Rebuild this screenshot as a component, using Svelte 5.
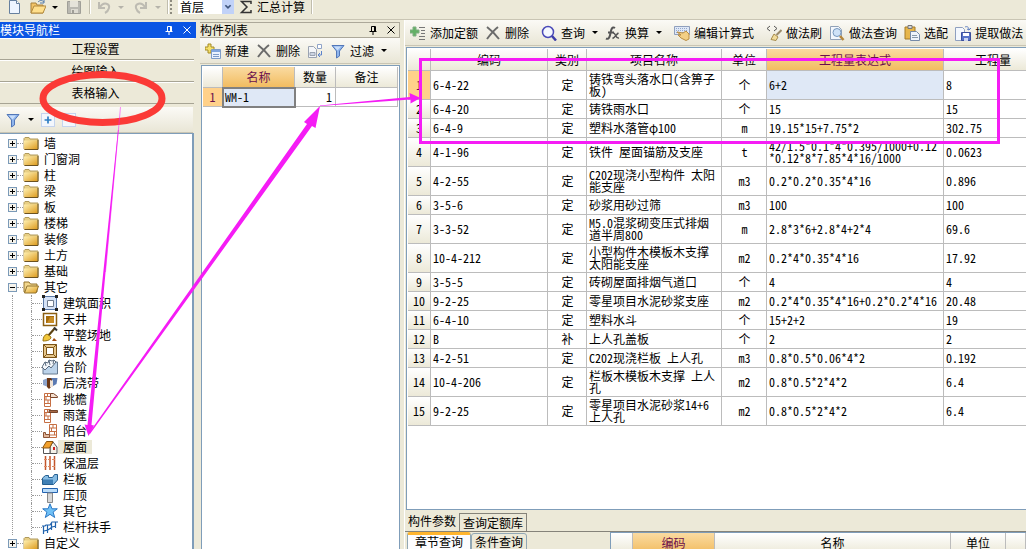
<script lang="ts">
    const folders = ['墙', '门窗洞', '柱', '梁', '板', '楼梯', '装修', '土方', '基础'];

    const children = [
        { text: '建筑面积', icon: 'area' },
        { text: '天井', icon: 'patio' },
        { text: '平整场地', icon: 'shovel' },
        { text: '散水', icon: 'apron' },
        { text: '台阶', icon: 'steps' },
        { text: '后浇带', icon: 'strip' },
        { text: '挑檐', icon: 'eave' },
        { text: '雨蓬', icon: 'canopy' },
        { text: '阳台', icon: 'balcony' },
        { text: '屋面', icon: 'roof' },
        { text: '保温层', icon: 'insulation' },
        { text: '栏板', icon: 'panel' },
        { text: '压顶', icon: 'coping' },
        { text: '其它', icon: 'star' },
        { text: '栏杆扶手', icon: 'rail' }
    ];

    const rows = [
        ['6-4-22', '定', '铸铁弯头落水口(含箅子板)', '个', '6+2', '8'],
        ['6-4-20', '定', '铸铁雨水口', '个', '15', '15'],
        ['6-4-9', '定', '塑料水落管φ100', 'm', '19.15*15+7.75*2', '302.75'],
        ['4-1-96', '定', '铁件 屋面锚筋及支座', 't', '42/1.5*0.1*4*0.395/1000+0.12*0.12*8*7.85*4*16/1000', '0.0623'],
        ['4-2-55', '定', 'C202现浇小型构件 太阳能支座', 'm3', '0.2*0.2*0.35*4*16', '0.896'],
        ['3-5-6', '定', '砂浆用砂过筛', 'm3', '100', '100'],
        ['3-3-52', '定', 'M5.0混浆砌变压式排烟道半周800', 'm', '2.8*3*6+2.8*4+2*4', '69.6'],
        ['10-4-212', '定', '小型构件木模板木支撑 太阳能支座', 'm2', '0.2*4*0.35*4*16', '17.92'],
        ['3-5-5', '定', '砖砌屋面排烟气道口', '个', '4', '4'],
        ['9-2-25', '定', '零星项目水泥砂浆支座', 'm2', '0.2*4*0.35*4*16+0.2*0.2*4*16', '20.48'],
        ['6-4-10', '定', '塑料水斗', '个', '15+2+2', '19'],
        ['B', '补', '上人孔盖板', '个', '2', '2'],
        ['4-2-51', '定', 'C202现浇栏板 上人孔', 'm3', '0.8*0.5*0.06*4*2', '0.192'],
        ['10-4-206', '定', '栏板木模板木支撑 上人孔', 'm2', '0.8*0.5*2*4*2', '6.4'],
        ['9-2-25', '定', '零星项目水泥砂浆14+6 上人孔', 'm2', '0.8*0.5*2*4*2', '6.4']
    ];

    const quotaTools = [
        { text: '添加定额', icon: 'addRow' },
        { text: '删除', icon: 'cross', sep: true },
        { text: '查询', icon: 'search', menu: true },
        { text: '换算', icon: 'fx', menu: true, sep: true },
        { text: '编辑计算式', icon: 'edit', sep: true },
        { text: '做法刷', icon: 'brush' },
        { text: '做法查询', icon: 'docSearch' },
        { text: '选配', icon: 'paste' },
        { text: '提取做法', icon: 'extract' }
    ];

    const listTools = [
        { text: '新建', icon: 'create' },
        { text: '删除', icon: 'cross' },
        { text: '', icon: 'copy' },
        { text: '过滤', icon: 'funnel', menu: true }
    ];

    const funnel = '<path d="M2 2.500h12l-4.500 5.500v5l-3 2v-7z" fill="#8fb5ec" stroke="#5277b8"/><path d="M4 3.500h7l-3.500 4z" fill="#c9def9"/>';
    const wall = '<path d="M2.500 2.500h6v13h-6zM2.500 5.500h6M2.500 9h6M2.500 12.500h6M5.500 2.500v3M4 5.500V9M6 9v3.500" fill="#fff" stroke="#c66f43"/>';

    const icons: Record<string, string> = {
        funnel,
        newDoc: '<path d="M3.500 1.500h7l3 3v10h-10z" fill="#eef5ff" stroke="#66809f"/><path d="M10.500 1.500v3h3" fill="#fff" stroke="#66809f"/>',
        open: '<path d="M1 4h5l1 2h6v8H1z" fill="#f3c467" stroke="#a8803a"/><path d="M4 7h12l-3 7H1z" fill="#ffdf8c" stroke="#b38a3e"/><path d="M8 3c2-2 4-2 6 0M14 0v4h-4" fill="none" stroke="#5078a8"/>',
        save: '<path d="M1.500 2.500h13v12h-13z" fill="#b9b8b1" stroke="#a09f98"/><path d="M4 2h8v6H4z" fill="#e5e3da"/><path d="M5 10h7v4H5z" fill="#dddbd2"/><path d="M6 11h2v3H6z" fill="#9f9e97"/>',
        undo: '<path d="M3 3v6h6M4 8c4-6 10-3 9 1-.5 2-2 4-4 5" fill="none" stroke="#bdbbb2" stroke-width="2"/>',
        redo: '<path d="M13 3v6H7M12 8C8 2 2 5 3 9c.5 2 2 4 4 5" fill="none" stroke="#bdbbb2" stroke-width="2"/>',
        sigma: '<path d="M13 5V2.500H3.500L9 8l-5.500 5.500H13V11" fill="none" stroke="#333" stroke-width="1.500"/>',
        cross: '<path d="M2 2c4 3 8 7 12 12M13 2C9 5 5 10 2 14" fill="none" stroke="#6b6b6b" stroke-width="2"/>',
        create: '<path d="M3 1h3v3h3v3H6v3H3V7H0V4h3z" fill="#f5e06a" stroke="#a48a24"/><path d="M6.500 6.500h9v9h-9z" fill="#e9f2ff" stroke="#7d9cc8"/><path d="M7 7h8v2H7z" fill="#7fa5de"/><path d="M8 11.500h6M8 13.500h6" stroke="#7d9cc8"/>',
        copy: '<path d="M1.500 3.500h5l3 3v8h-8z" fill="#f4f6fa" stroke="#9aa3b2"/><path d="M3 9.500h5v3H3z" fill="#ccd4e2" stroke="#9aa3b2"/><path d="M10.500 1.500h4v4h-4z" fill="#fff" stroke="#8fa3c8"/><path d="M14.500 8v4h-3M13 10l-2 2 2 2" fill="none" stroke="#5c83cc"/>',
        addRow: '<path d="M3 2h3v3h3v3H6v3H3V8H0V5h3z" fill="#62b065" stroke="#7fae82"/><path d="M9 2.500h6M11 5.500h4M11 8.500h4M9 11.500h6M9 14.500h6" stroke="#777"/>',
        search: '<circle cx="7" cy="7" r="5.500" fill="#f5f8ff" stroke="#4a4ab8" stroke-width="1.500"/><path d="M11 11l4 4.500" stroke="#3d3da8" stroke-width="2.500"/>',
        fx: '<path d="M10 3c-3-2-4 2-4.500 5s-1.500 7-4.500 5.500M3 7.500h6" fill="none" stroke="#555" stroke-width="2"/><path d="M8 8c3-1 2 6 6 5M13.500 8c-2 1-3 4-6 5.500" fill="none" stroke="#555" stroke-width="1.500"/>',
        edit: '<path d="M.5 1.500h15v8H.5z" fill="#dfe8f7" stroke="#8f9fbd"/><path d="M2 3.500h12M2 5.500h12M2 7.500h12" stroke="#93a7cc" stroke-dasharray="1 1"/><path d="M3 7l6 1 3-2 3 3v5l-3 1.500-5-2.500-3-3h3z" fill="#f3cf85" stroke="#b98c42"/>',
        brush: '<path d="M4 1L1 3.500 4 6M8 1l3 2.500L8 6" fill="none" stroke="#555"/><path d="M15.500 5l-5 5" stroke="#9a8a6a" stroke-width="2"/><path d="M8 9l4 3-2 3.500-5-1z" fill="#f2dc9b" stroke="#a68b4b"/>',
        docSearch: '<path d="M1.500 1.500h8l3 3v10h-11z" fill="#f3f7fd" stroke="#91a1b7"/><circle cx="8" cy="7.500" r="4" fill="#cfe2f7" stroke="#7798bd"/><path d="M11 11l3.500 4" stroke="#b6873c" stroke-width="2.500"/>',
        paste: '<path d="M1 2h10v12H1z" fill="#e7b64a" stroke="#a47a28"/><path d="M4 .5h4v3H4z" fill="#d6d6d6" stroke="#777"/><path d="M6.500 6.500h6l3 3v6h-9z" fill="#eef4fc" stroke="#768aa8"/><path d="M8 10.500h5M8 12.500h6" stroke="#89a"/>',
        extract: '<path d="M.5 2.500h7l2 2v11h-9z" fill="#f4f8fe" stroke="#8fa0c0"/><path d="M10 2c2-1 4 0 4 3M12 4l2 1 2-2" fill="none" stroke="#5d7ec2"/><path d="M6.500 7.500h9v8h-9z" fill="#5873c8" stroke="#3b4f9c"/><path d="M8 8h6v3H8z" fill="#fff"/><path d="M9 13h4v3H9z" fill="#cbd5f2"/>',
        folder: '<path d="M1 5V3.500l1-1h4L7 4h8v10H1z" fill="#e8cf85" stroke="#b09a5c"/><path d="M1 5.500h13.500V14H1z" fill="url(#gold)"/><path d="M15 5v9.500H1.500" fill="none" stroke="#6b5220"/>',
        folderOpen: '<path d="M1 13V3h5l1.500 2H14v8z" fill="#f2d78d" stroke="#94742f"/><path d="M4 7h11.500l-2.500 7H1.500z" fill="url(#gold)" stroke="#94742f"/>',
        area: '<path d="M1.500 1.500h13v13h-13z" fill="#d5e2f6" stroke="#5b7aa8"/><path d="M5.500 5.500h6v6h-6z" fill="#fff" stroke="#6f7b8d"/><path d="M0 0h3v3H0zM13 0h3v3h-3zM0 13h3v3H0zM13 13h3v3h-3z" fill="#222"/>',
        patio: '<path d="M1.500 2.500h13v12h-13z" fill="#fff" stroke="#8c5f12" stroke-width="1.500"/><path d="M4 5h8v7H4z" fill="#a56b0b"/><path d="M8 6h4v6H5z" fill="#c88d27"/>',
        shovel: '<path d="M13 1L6 9" stroke="#5c4212" stroke-width="2"/><path d="M12 .5l3 3" stroke="#333" stroke-width="2"/><path d="M5 7l4 3c0 3-4 4-8 4 0-3 1-6 4-7z" fill="#f2c73c" stroke="#9a7412"/><path d="M10 14l2-3 3 3z" fill="#a24c12"/>',
        apron: '<path d="M1.500 1.500h13v13h-13z" fill="#e7c78c" stroke="#7c5416"/><path d="M4.500 4.500h7v7h-7z" fill="#fff" stroke="#7c5416"/><path d="M1.500 1.500l3 3M14.500 1.500l-3 3M1.500 14.500l3-3M14.500 14.500l-3-3" stroke="#7c5416"/>',
        steps: '<path d="M1 15V9l5-3 3 2 5-5h1.500v12z" fill="#bcd3ea" stroke="#667a91"/><path d="M0 8l3-5 3 1 1-3 3 1 2-1 2 2-5 6-2-2-4 4z" fill="#f3f6fa" stroke="#5a6b7e"/><path d="M3 3l1 4M7 1l1 5M12 1l-1 4" stroke="#5a6b7e"/>',
        strip: '<path d="M1 5l5-2v9l-5-2z" fill="#8da4cb"/><path d="M5 3h5v8l-3 3-2-2z" fill="#6b3716"/><path d="M8 5l3 1v6H8z" fill="#f0e3d6"/><path d="M9 3h6.500l-1 6-3.500 2V6z" fill="#5b7ab2"/>',
        eave: wall + '<path d="M8.500 2.500h3l4 3v1h-7z" fill="#f4dfcf" stroke="#7a452a"/>',
        canopy: wall + '<path d="M7 3.500h8.500v2H7z" fill="#a76a47" stroke="#74452c"/>',
        balcony: '<path d="M7.500 1.500h7v13h-7zM7.500 5h7M7.500 8.500h7M7.500 12h7M11 1.500V5M9.500 5v3.500M12.500 8.500V12" fill="#fff" stroke="#c66f43"/><path d="M1.500 9.500v5h6v-3h-4v-2z" fill="#e3b79a" stroke="#8c5436"/>',
        roof: '<path d="M11 3l4 5v6.500H8V8z" fill="#f4f1e8" stroke="#555"/><path d="M1.500 8v6.500H8V8z" fill="#fff" stroke="#555"/><path d="M.5 9l4-6.500H11L7.500 9z" fill="#f2a02c" stroke="#8a5510"/><path d="M12 8v3" stroke="#c22" stroke-width="2"/>',
        insulation: '<path d="M3.500 1v14M8 1v14M12.500 1v14" stroke="#c2542a" stroke-width="1.500"/><path d="M2 4.500h12M2 11.500h12" stroke="#dd8a63" stroke-dasharray="3 1"/>',
        panel: '<path d="M.5 7l3-2.500h3v2h4l2-3h3V9l-4 4.500H.5z" fill="#86bce4" stroke="#245f91"/><path d="M1 8.500h10V13H1z" fill="#3f7fb5"/>',
        coping: '<path d="M.5 1.500h15v4H.5z" fill="#b9dcfa" stroke="#2463b0"/><path d="M5.500 6h5v9.500h-5z" fill="#d7d7d7" stroke="#888"/>',
        star: '<path d="M8 .8l2 5h5.300l-4.200 3.300 1.600 5.400L8 11.300l-4.700 3.200 1.600-5.400L.7 5.800H6z" fill="#6fc0f6" stroke="#2b77c4"/>',
        rail: '<path d="M0 7h3l1-1h4l2-3h6M2 12l4-1 4-3 4-1M1.500 7v8M5.500 6v8M9.500 4v7M13.500 3v6" fill="none" stroke="#1f62ad" stroke-width="1.200"/>'
    };

    let floor = $state('首层');
    let selected = $state('屋面');
</script>

{#snippet icon(name: string)}
    <svg class="icon" viewBox="0 0 16 16" aria-hidden="true">{@html icons[name]}</svg>
{/snippet}

{#snippet titleButtons()}
    <button class="mini" aria-label="固定">
        <svg viewBox="0 0 10 10"><path d="M3.500 6V1.500h4V6M1.500 6.500h7M6.500 1.500V6M5 6.500V10" fill="none" stroke="currentColor" /></svg>
    </button>
    <button class="mini" aria-label="关闭">
        <svg viewBox="0 0 10 10"><path d="M1.500 1.500l7 7M8.500 1.500l-7 7" fill="none" stroke="currentColor" /></svg>
    </button>
{/snippet}

<svg class="defs" aria-hidden="true">
    <defs>
        <linearGradient id="gold" x2="1" y2="1">
            <stop offset="0" stop-color="#fff0b0" />
            <stop offset="1" stop-color="#dd9c20" />
        </linearGradient>
    </defs>
</svg>

<div class="app">
    <header class="topbar">
        <div class="group files">
            <button aria-label="新建">{@render icon('newDoc')}</button>
            <button aria-label="打开">{@render icon('open')}<i class="caret"></i></button>
            <button aria-label="保存">{@render icon('save')}</button>
        </div>
        <div class="group history">
            <button aria-label="撤销" disabled>{@render icon('undo')}<i class="caret"></i></button>
            <button aria-label="恢复" disabled>{@render icon('redo')}<i class="caret"></i></button>
        </div>
        <div class="group">
            <span class="grip"></span>
            <div class="pick">
                <select aria-label="楼层" bind:value={floor}>
                    <option>首层</option>
                </select>
                <svg class="arrow" viewBox="0 0 12 16"><path d="M3 6l3 3 3-3" fill="none" stroke="#40567e" stroke-width="2" /></svg>
            </div>
            <button>{@render icon('sigma')}<span>汇总计算</span></button>
        </div>
    </header>

    <main>
        <aside class="nav">
            <div class="title active"><h2>模块导航栏</h2>{@render titleButtons()}</div>
            <button class="section">工程设置</button>
            <button class="section">绘图输入</button>
            <button class="section">表格输入</button>
            <div class="tools tree-tools">
                <button aria-label="过滤">{@render icon('funnel')}<i class="caret"></i></button>
                <button class="box" aria-label="展开"><svg viewBox="0 0 14 14"><path d="M7 3v8M3 7h8" stroke="#2f7fc4" stroke-width="2" /></svg></button>
                <button class="box" aria-label="折叠"><svg viewBox="0 0 14 14"><path d="M3 7h8" stroke="#2f7fc4" stroke-width="2" /></svg></button>
            </div>
            <ul class="tree">
                {#each folders as name}
                    <li><button class="node"><i class="toggle plus"></i><i class="dots"></i>{@render icon('folder')}<span>{name}</span></button></li>
                {/each}
                <li>
                    <button class="node"><i class="toggle"></i><i class="dots"></i>{@render icon('folderOpen')}<span>其它</span></button>
                    <ul>
                        {#each children as child}
                            <li>
                                <button class="node" class:selected={selected === child.text} onclick={() => (selected = child.text)}>
                                    <i class="dots"></i>{@render icon(child.icon)}<span>{child.text}</span>
                                </button>
                            </li>
                        {/each}
                    </ul>
                </li>
                <li><button class="node"><i class="toggle plus"></i><i class="dots"></i>{@render icon('folder')}<span>自定义</span></button></li>
            </ul>
        </aside>

        <section class="list">
            <div class="title"><h2>构件列表</h2>{@render titleButtons()}</div>
            <div class="tools">
                {#each listTools as tool}
                    <button aria-label={tool.text || '复制'}>
                        {@render icon(tool.icon)}
                        {#if tool.text}<span>{tool.text}</span>{/if}
                        {#if tool.menu}<i class="caret"></i>{/if}
                    </button>
                {/each}
            </div>
            <div class="sheet">
                <table class="parts">
                    <colgroup><col class="p-no" /><col class="p-name" /><col class="p-count" /><col /></colgroup>
                    <thead>
                        <tr><th></th><th class="hot">名称</th><th>数量</th><th>备注</th></tr>
                    </thead>
                    <tbody>
                        <tr><th class="current">1</th><td class="picked">WM-1</td><td class="right">1</td><td></td></tr>
                    </tbody>
                </table>
            </div>
        </section>

        <section class="quota">
            <div class="tools">
                {#each quotaTools as tool}
                    <button>
                        {@render icon(tool.icon)}<span>{tool.text}</span>
                        {#if tool.menu}<i class="caret"></i>{/if}
                    </button>
                    {#if tool.sep}<i class="sep"></i>{/if}
                {/each}
            </div>
            <div class="sheet">
                <table class="items">
                    <colgroup>
                        <col class="c-no" /><col class="c-code" /><col class="c-kind" /><col class="c-name" />
                        <col class="c-unit" /><col class="c-expr" /><col class="c-qty" />
                    </colgroup>
                    <thead>
                        <tr>
                            <th></th><th>编码</th><th>类别</th><th>项目名称</th><th>单位</th><th class="hot">工程量表达式</th><th>工程量</th>
                        </tr>
                    </thead>
                    <tbody>
                        {#each rows as [code, kind, name, unit, expr, qty], i}
                            <tr>
                                <th class:current={i === 0}>{i + 1}</th>
                                <td>{code}</td>
                                <td class="center">{kind}</td>
                                <td>{name}</td>
                                <td class="center">{unit}</td>
                                <td class="expr" class:focus={i === 0}>{expr}</td>
                                <td>{qty}</td>
                            </tr>
                        {/each}
                    </tbody>
                </table>
            </div>
            <div class="tabs">
                <button>构件参数</button>
                <button class="on">查询定额库</button>
            </div>
            <div class="lookup">
                <div class="subtabs">
                    <button class="on">章节查询</button>
                    <button>条件查询</button>
                </div>
                <div class="result">
                    <table>
                        <colgroup><col class="r-no" /><col class="r-code" /><col /><col class="r-unit" /><col class="r-last" /></colgroup>
                        <thead>
                            <tr><th></th><th class="hot">编码</th><th>名称</th><th>单位</th><th></th></tr>
                        </thead>
                    </table>
                </div>
            </div>
        </section>
    </main>

    <!-- hand-drawn marks over the window -->
    <svg class="marks" width="1026" height="549" viewBox="0 0 1026 549" aria-hidden="true">
        <ellipse cx="102.500" cy="98.500" rx="59.500" ry="24" fill="none" stroke="#fb3a36" stroke-width="7" />
        <g fill="#f51cf5">
            <path d="M118 130h.6L91.500 425l2.500.5-5.500 10.500-4-11.500 3 .5z" />
            <path d="M89 433l218-309-3-2 16-16-4.500 22-3.500-2L90 434z" />
            <path d="M320 105.500l90-8.500-.5-4 11 5-10 5.500v-4l-90.500 6.500z" />
        </g>
        <path d="M120.500 107l-15 165" stroke="#f51cf5" opacity=".5" />
        <rect x="420.500" y="59.500" width="578" height="83" fill="none" stroke="#f51cf5" stroke-width="3" />
    </svg>
</div>

<style>
    :global(body) {
        margin: 0;
    }

    .app {
        position: relative;
        display: flex;
        flex-direction: column;
        height: 100vh;
        overflow: hidden;
        color: #000;
        background: #ece9d8;
        font: 12px/14px 'Noto Sans CJK SC', sans-serif;
    }

    .defs {
        position: absolute;
        width: 0;
        height: 0;
    }

    .marks {
        position: absolute;
        top: 0;
        left: 0;
        pointer-events: none;
    }

    button {
        display: flex;
        flex: none;
        align-items: center;
        padding: 0;
        border: none;
        color: inherit;
        background: none;
        font: inherit;
        white-space: nowrap;
    }

    .icon {
        flex: none;
        width: 16px;
        height: 16px;
    }

    .caret {
        border: 3px solid transparent;
        border-top-color: #000;
        border-bottom: none;
    }

    .topbar {
        display: flex;
        flex: none;
        height: 19px;
        border-bottom: 1px solid #c9c5b4;
    }

    .group {
        display: flex;
        align-items: center;
        height: 14px;
        padding-bottom: 4px;
        border-right: 1px solid #c0bdad;
        box-shadow: 1px 0 #fff;
    }

    .group button {
        gap: 6px;
    }

    .files {
        gap: 8px;
        padding: 0 7px 0 6px;
    }

    .history {
        gap: 9px;
        padding: 0 6px;
    }

    .history .caret {
        border-top-color: #b5b3aa;
    }

    .group:last-child {
        gap: 4px;
        padding: 0 6px 0 2px;
    }

    .group:last-child button {
        gap: 3px;
    }

    .grip {
        width: 2px;
        height: 14px;
        border-left: 2px dotted #8d8b80;
    }

    .pick {
        display: flex;
        width: 56px;
        height: 14px;
        background: #fff;
    }

    .pick select {
        flex: 1;
        width: 0;
        padding: 0 2px;
        border: none;
        appearance: none;
        background: none;
        font: inherit;
    }

    .arrow {
        width: 12px;
        background: #c1d2f8;
    }

    main {
        display: flex;
        flex: 1;
        min-height: 0;
    }

    .nav {
        display: flex;
        flex: none;
        flex-direction: column;
        width: 196px;
        padding-top: 2px;
        overflow: hidden;
    }

    .list {
        display: flex;
        flex: none;
        flex-direction: column;
        width: 200px;
        padding: 2px 4px 0;
    }

    .quota {
        display: flex;
        flex: 1;
        flex-direction: column;
        min-width: 0;
        border-left: 1px solid #fff;
    }

    .title {
        display: flex;
        flex: none;
        align-items: center;
        height: 14px;
        padding-right: 3px;
        gap: 8px;
        border: 1px solid #aca899;
        border-left: none;
    }

    .title.active {
        border-color: #0a55e4;
        color: #fff;
        background: #0a55e4;
    }

    h2 {
        flex: 1;
        margin: 0;
        font-size: 12px;
        font-weight: normal;
    }

    .mini svg {
        width: 10px;
        height: 10px;
    }

    .section {
        justify-content: center;
        height: 22px;
        margin-right: 2px;
        padding-right: 3px;
        border-top: 1px solid #fff;
        border-bottom: 1px solid #a7a494;
    }

    .tools {
        display: flex;
        flex: none;
        align-items: center;
        gap: 7px;
        height: 25px;
        padding: 0 5px;
        background: linear-gradient(#fbfaf6, #e9e6d6);
        border-bottom: 1px solid #c9c5b4;
    }

    .tools button {
        gap: 4px;
    }

    .tools .caret {
        margin-left: 3px;
    }

    .sep {
        width: 1px;
        height: 18px;
        margin: 0 -1px;
        background: #bbb8a8;
    }

    .tree-tools {
        margin: 3px 3px 0 0;
    }

    .box {
        width: 14px;
        height: 14px;
        border: 1px solid #c5d4ee;
        background: #f3f7fd;
    }

    .tree {
        flex: 1;
        margin: 0 2px 0 0;
        padding: 1px 0 0 8px;
        overflow: hidden;
        border-top: 1px solid #7f9db9;
        border-right: 2px solid #7f9db9;
        background: #fff;
    }

    ul {
        margin: 0;
        padding: 0;
        list-style: none;
    }

    .tree li ul {
        margin-left: 4px;
        padding-left: 18px;
        border-left: 1px dotted #999;
    }

    .tree li ul li {
        border-left: 1px dotted #999;
    }

    .node {
        height: 16px;
    }

    .node span {
        padding: 0 5px;
    }

    .selected span {
        background: #ece9d8;
    }

    .toggle {
        width: 7px;
        height: 7px;
        border: 1px solid #7b9ab8;
        background: linear-gradient(#000, #000) center / 5px 1px no-repeat, #f5f3ec;
    }

    .toggle.plus {
        background: linear-gradient(#000, #000) center / 5px 1px no-repeat, linear-gradient(#000, #000) center / 1px 5px no-repeat, #f5f3ec;
    }

    .dots {
        width: 6px;
        border-top: 1px dotted #999;
    }

    .tree ul .dots {
        width: 10px;
    }

    .list .tools {
        margin-bottom: 1px;
    }

    .sheet {
        flex: 1;
        min-height: 0;
        overflow: hidden;
        padding: 1px;
        border: 1px solid #7f9db9;
        background: #fff;
    }

    .list .sheet {
        margin-left: 1px;
        border-bottom: none;
    }

    .quota .sheet {
        margin: 1px 0 0 1px;
        border-right: none;
    }

    table {
        width: 100%;
        border-spacing: 0;
        table-layout: fixed;
        line-height: 12px;
    }

    th,
    td {
        box-sizing: border-box;
        height: 19px;
        padding: 2px 1px 2px 2px;
        border-right: 1px solid #bcbcbc;
        border-bottom: 1px solid #bcbcbc;
        font-weight: normal;
        text-align: left;
        font-family: 'Noto Sans Mono CJK SC', 'Noto Sans CJK SC', monospace;
    }

    th {
        padding: 0;
        text-align: center;
        background: linear-gradient(#fff, #ece9d8);
    }

    thead th {
        height: 21px;
    }

    .items thead th {
        height: 22px;
    }

    .hot {
        color: #6b0f4d;
        background: linear-gradient(#fadba2, #f2bc60);
    }

    .current {
        color: #6b0f4d;
        background: #ffd18a;
    }

    .center {
        text-align: center;
    }

    .right {
        padding-right: 3px;
        text-align: right;
    }

    .expr {
        word-break: break-all;
    }

    .focus {
        background: #dfe8f6;
    }

    .picked {
        background: #dfe8f6;
        outline: 2px solid #808080;
        outline-offset: -1px;
    }

    .items {
        min-width: 635px;
    }

    .p-no {
        width: 20px;
    }

    .p-name {
        width: 72px;
    }

    .p-count {
        width: 41px;
    }

    .c-no {
        width: 23px;
    }

    .c-code {
        width: 117px;
    }

    .c-kind {
        width: 39px;
    }

    .c-name {
        width: 135px;
    }

    .c-unit {
        width: 45px;
    }

    .c-expr {
        width: 177px;
    }

    .tabs {
        display: flex;
        flex: none;
        height: 21px;
        border-bottom: 1px solid #85837a;
    }

    .tabs button {
        padding: 0 3px;
    }

    .tabs .on {
        margin-top: 3px;
        border: 1px solid #85837a;
        border-bottom: none;
    }

    .lookup {
        display: flex;
        flex: none;
        height: 17px;
        overflow: hidden;
    }

    .subtabs {
        display: flex;
        width: 203px;
        padding-left: 2px;
    }

    .subtabs button {
        height: 18px;
        margin-top: 1px;
        padding: 0 3px;
        border: 1px solid #91a7b4;
        border-radius: 3px 3px 0 0;
    }

    .subtabs .on {
        margin-top: 0;
        padding: 0 7px;
        border-top: 3px solid #ffb52e;
        background: #fcfcfe;
    }

    .result {
        flex: 1;
        overflow: hidden;
        border-top: 1px solid #7f9db9;
        border-left: 1px solid #7f9db9;
        background: #fff;
    }

    .r-no {
        width: 22px;
    }

    .r-code {
        width: 82px;
    }

    .r-unit {
        width: 55px;
    }

    .r-last {
        width: 20px;
    }
</style>
